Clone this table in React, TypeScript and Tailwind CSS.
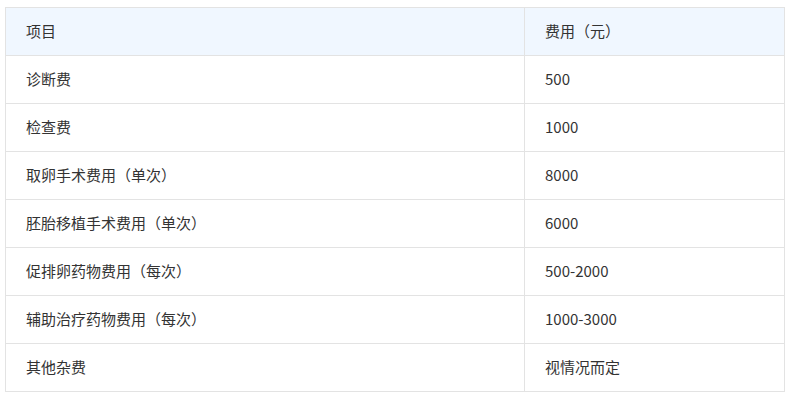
const rows: [string, string][] = [
  ['诊断费', '500'],
  ['检查费', '1000'],
  ['取卵手术费用（单次）', '8000'],
  ['胚胎移植手术费用（单次）', '6000'],
  ['促排卵药物费用（每次）', '500-2000'],
  ['辅助治疗药物费用（每次）', '1000-3000'],
  ['其他杂费', '视情况而定'],
]

export default function App() {
  return (
    <div className="bg-white pl-[5px] pt-[7px] w-[795px] h-[399px] font-['Noto_Sans_CJK_SC','Noto_Sans',sans-serif] text-[15px] text-[#333]">
      <table className="w-[780px] border-collapse table-fixed">
        <colgroup>
          <col className="w-[519px]" />
          <col />
        </colgroup>
        <thead>
          <tr className="bg-[#f0f7ff] h-[48px]">
            <th className="border border-[#e3e3e3] px-5 text-left font-normal">项目</th>
            <th className="border border-[#e3e3e3] px-5 text-left font-normal">费用（元）</th>
          </tr>
        </thead>
        <tbody>
          {rows.map(([item, cost]) => (
            <tr key={item} className="h-[48px]">
              <td className="border border-[#e3e3e3] px-5">{item}</td>
              <td className="border border-[#e3e3e3] px-5">{cost}</td>
            </tr>
          ))}
        </tbody>
      </table>
    </div>
  )
}
